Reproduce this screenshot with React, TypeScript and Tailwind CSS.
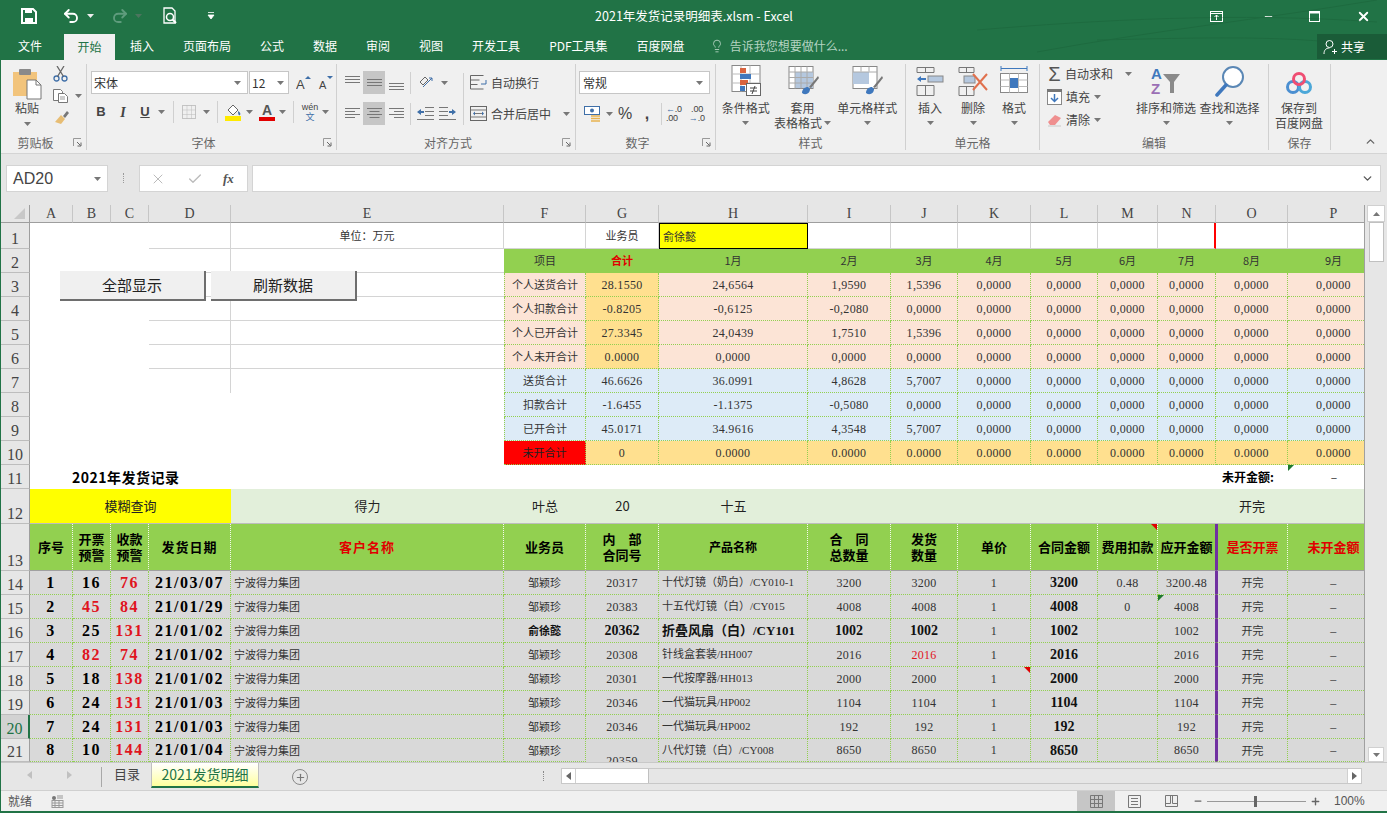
import type { ReactNode } from "react";
import { ChevronDown, ChevronUp, Lightbulb, Minus, Plus, Undo2, Redo2, X, Check } from "lucide-react";
import { twMerge } from "tailwind-merge";

const ui = "font-['Noto_Sans_CJK_SC','Noto_Sans',sans-serif]";
const thin = "font-['Liberation_Serif','Noto_Sans_CJK_SC',serif]";

function Caret({ className = "" }: { className?: string }) {
  return (
    <svg width="7" height="4" viewBox="0 0 7 4" className={`shrink-0 ${className}`}>
      <path d="M0 0h7L3.5 4z" fill="#777" />
    </svg>
  );
}

function Launcher() {
  return (
    <svg width="9" height="9" viewBox="0 0 9 9" className="absolute right-[4px] bottom-[3px]">
      <path d="M.5 8V.5H8" fill="none" stroke="#999" />
      <path d="M4 4l3.5 3.5M8 4.5V8H4.5" fill="none" stroke="#666" />
    </svg>
  );
}

function Group({ w, label, launcher, children }: { w: string; label: string; launcher?: boolean; children: ReactNode }) {
  return (
    <div className={`relative flex h-[86px] flex-col border-r border-[#d0d0d0] ${w}`}>
      <div className="flex min-h-0 flex-1">{children}</div>
      <div className={`flex h-[16px] items-center justify-center pt-[2px] text-[12px] leading-none text-[#666] ${launcher ? "pr-[16px]" : ""}`}>{label}</div>
      {launcher && <Launcher />}
    </div>
  );
}

function Slot({ w = "w-[22px]", sel, children }: { w?: string; sel?: boolean; children: ReactNode }) {
  return <div className={`flex h-[23px] shrink-0 items-center justify-center ${w} ${sel ? "bg-[#c6c6c6]" : ""}`}>{children}</div>;
}

function HLines({ y, widths, align = "l" }: { y: number; widths: number[]; align?: "l" | "c" | "r" }) {
  return (
    <svg width="15" height="17" viewBox="0 0 15 17">
      {widths.map((w, i) => {
        const x = align === "l" ? 0 : align === "c" ? (15 - w) / 2 : 15 - w;
        return <path key={i} d={`M${x} ${y + i * 3 + 0.5}h${w}`} stroke="#777" />;
      })}
    </svg>
  );
}

function BigButton({ w, icon, lines, caret = "below" }: { w: string; icon: ReactNode; lines: string[]; caret?: "below" | "inline" | "none" }) {
  return (
    <div className={`flex flex-col items-center ${w}`}>
      <div className="flex h-[33px] items-end justify-center">{icon}</div>
      <div className="mt-[3px] text-center text-[12px] leading-[15px] whitespace-nowrap text-[#444]">
        {lines.map((l, i) => (
          <div key={i} className="flex items-center justify-center gap-[2px]">
            {l}
            {caret === "inline" && i === lines.length - 1 && <Caret />}
          </div>
        ))}
      </div>
      {caret === "below" && <Caret className="mt-[6px]" />}
    </div>
  );
}

function SheetGridIcon({ children }: { children: ReactNode }) {
  return (
    <svg width="34" height="32" viewBox="0 0 34 32">
      {children}
    </svg>
  );
}

function Ribbon() {
  return (
    <div className="flex h-[94px] shrink-0 items-start border-b border-[#d4d4d4] bg-[#f0f0f0] pt-[4px] text-[12px] text-[#444]">
      <Group w="w-[86px]" label="剪贴板" launcher>
        <div className="flex w-[52px] flex-col items-center pt-[4px]">
          <svg width="30" height="32" viewBox="0 0 30 32">
            <rect x="1" y="4" width="24" height="24" fill="#f2c47c" />
            <rect x="7" y="1" width="12" height="6" rx="1" fill="#8a8a8a" />
            <path d="M15 12h9l5 5v14H15z" fill="#fff" stroke="#777" />
            <path d="M24 12v5h5" fill="none" stroke="#777" />
          </svg>
          <div className="text-[12px] leading-[16px]">粘贴</div>
          <Caret className="mt-[6px]" />
        </div>
        <div className="flex flex-col gap-[7px] pt-[2px]">
          <svg width="15" height="16" viewBox="0 0 15 16">
            <circle cx="3.5" cy="12.5" r="2.5" fill="none" stroke="#3f6fa8" strokeWidth="1.3" />
            <circle cx="11.5" cy="12.5" r="2.5" fill="none" stroke="#3f6fa8" strokeWidth="1.3" />
            <path d="M4.5 10.5L11 0M10.5 10.5L4 0" stroke="#666" strokeWidth="1.3" />
          </svg>
          <div className="flex items-center gap-[7px]">
            <svg width="15" height="14" viewBox="0 0 15 14">
              <path d="M.5.5h7l2 2v9h-9z" fill="#fff" stroke="#777" />
              <path d="M5.5 4.5h6l3 3v6h-9z" fill="#fff" stroke="#777" />
              <path d="M7 8h5M7 10h5" stroke="#999" />
            </svg>
            <Caret />
          </div>
          <svg width="16" height="14" viewBox="0 0 16 14" className="ml-[1px]">
            <path d="M1 12l6-7 4 4-4 5z" fill="#e7bd74" />
            <path d="M9 6l4-5 2 2-4 5z" fill="#777" />
          </svg>
        </div>
      </Group>

      <Group w="w-[250px]" label="字体" launcher>
        <div className="flex flex-col pt-[7px] pl-[4px]">
          <div className="flex items-center">
            <div className="flex h-[23px] w-[157px] items-center justify-between border border-[#c6c6c6] bg-white pr-[6px] pl-[2px]">
              <span className="text-[12px] text-[#333]">宋体</span>
              <Caret />
            </div>
            <div className="ml-[1px] flex h-[23px] w-[40px] items-center justify-between border border-[#c6c6c6] bg-white pr-[4px] pl-[2px]">
              <span className="text-[12px] text-[#333]">12</span>
              <Caret />
            </div>
            <svg width="16" height="14" viewBox="0 0 16 14" className="ml-[7px]">
              <text x="0" y="13" fontSize="13" fontFamily="Liberation Sans" fill="#444">A</text>
              <path d="M9 3l3-3 3 3z" fill="#3f6fa8" />
            </svg>
            <svg width="16" height="14" viewBox="0 0 16 14" className="ml-[6px]">
              <text x="1" y="13" fontSize="11" fontFamily="Liberation Sans" fill="#444">A</text>
              <path d="M9 0l3 3 3-3z" fill="#3f6fa8" />
            </svg>
          </div>
          <div className="mt-[7px] flex items-center">
            <div className="ml-[2px] flex w-[16px] justify-center font-['Liberation_Sans'] text-[13px] font-bold">B</div>
            <div className="ml-[6px] flex w-[16px] justify-center font-['Liberation_Serif'] text-[14px] font-bold italic">I</div>
            <div className="ml-[6px] flex w-[16px] justify-center font-['Liberation_Sans'] text-[13px] font-bold underline">U</div>
            <Caret className="ml-[5px]" />
            <div className="mx-[8px] h-[22px] w-px bg-[#d0d0d0]" />
            <svg width="14" height="14" viewBox="0 0 14 14">
              <rect x=".5" y=".5" width="13" height="13" fill="none" stroke="#999" strokeDasharray="1 1" />
              <path d="M.5 5h13M.5 9.5h13M5 .5v13M9.5 .5v13" stroke="#bbb" strokeDasharray="1 1" />
            </svg>
            <Caret className="ml-[7px]" />
            <div className="mx-[7px] h-[22px] w-px bg-[#d0d0d0]" />
            <svg width="17" height="20" viewBox="0 0 17 20">
              <path d="M3 8l5-5 5 5-5 5z" fill="#fff" stroke="#666" />
              <path d="M13 9c2 1 3 3 2 4s-2 0-2-4z" fill="#3f6fa8" />
              <rect y="14" width="16" height="5" fill="#ffea00" />
            </svg>
            <Caret className="ml-[4px]" />
            <div className="relative ml-[6px] h-[20px] w-[16px] text-center font-['Liberation_Sans'] text-[14px] leading-[16px] font-bold text-[#555]">
              A
              <div className="absolute bottom-[1px] left-0 h-[4px] w-full bg-[#e20000]" />
            </div>
            <Caret className="ml-[4px]" />
            <div className="mx-[7px] h-[22px] w-px bg-[#d0d0d0]" />
            <div className="flex w-[18px] flex-col items-center leading-none">
              <span className="font-['Liberation_Sans'] text-[9px] text-[#444]">wén</span>
              <span className="text-[9px] text-[#3f6fa8]">文</span>
            </div>
            <Caret className="ml-[3px]" />
          </div>
        </div>
      </Group>

      <Group w="w-[239px]" label="对齐方式" launcher>
        <div className="flex flex-col pt-[7px] pl-[4px]">
          <div className="flex items-center">
            <Slot><HLines y={2} widths={[15, 15, 15]} /></Slot>
            <Slot sel><HLines y={5} widths={[15, 15, 15]} /></Slot>
            <Slot><HLines y={9} widths={[15, 15, 15]} /></Slot>
            <div className="mx-[3px] h-[22px] w-px bg-[#d0d0d0]" />
            <Slot w="w-[24px]">
              <svg width="16" height="14" viewBox="0 0 16 14">
                <path d="M2 6l5-5 3 3-5 5z" fill="none" stroke="#666" />
                <path d="M5 11l9-9M11 2h3v3" fill="none" stroke="#3f6fa8" />
              </svg>
            </Slot>
            <Caret className="ml-[3px]" />
          </div>
          <div className="mt-[8px] flex items-center">
            <Slot><HLines y={3} widths={[15, 10, 15, 10]} /></Slot>
            <Slot sel><HLines y={3} widths={[15, 10, 15, 10]} align="c" /></Slot>
            <Slot><HLines y={3} widths={[15, 10, 15, 10]} align="r" /></Slot>
            <div className="mx-[3px] h-[22px] w-px bg-[#d0d0d0]" />
            <Slot>
              <svg width="17" height="13" viewBox="0 0 17 13">
                <path d="M8 .5h9M8 4.5h9M8 8.500h9M0 12.500h17" stroke="#777" />
                <path d="M0 5l4-3v2h3v2H4v2z" fill="#3f6fa8" />
              </svg>
            </Slot>
            <Slot>
              <svg width="17" height="13" viewBox="0 0 17 13">
                <path d="M0 .5h9M0 4.5h9M0 8.500h9M0 12.500h17" stroke="#777" />
                <path d="M17 5l-4-3v2h-3v2h3v2z" fill="#3f6fa8" />
              </svg>
            </Slot>
          </div>
        </div>
        <div className="mx-[5px] mt-[9px] h-[52px] w-px bg-[#d0d0d0]" />
        <div className="flex flex-col pt-[7px] pl-[1px]">
          <div className="flex h-[23px] items-center gap-[4px] whitespace-nowrap">
            <svg width="17" height="15" viewBox="0 0 17 15">
              <path d="M.5.5h13M.5 5h9M.5 9.5h7M.5 14h13M.5.5v13.5" fill="none" stroke="#666" />
              <path d="M16 5v4h-5" fill="none" stroke="#3f6fa8" />
            </svg>
            自动换行
          </div>
          <div className="mt-[8px] flex h-[23px] items-center gap-[4px] whitespace-nowrap">
            <svg width="17" height="15" viewBox="0 0 17 15">
              <rect x=".5" y=".5" width="16" height="14" fill="none" stroke="#666" />
              <path d="M.5 4h16M.5 11h16M4 7.5h9" stroke="#777" />
              <path d="M3 7.5l2-2v4zM14 7.5l-2-2v4z" fill="#3f6fa8" />
            </svg>
            合并后居中
            <Caret className="ml-[8px]" />
          </div>
        </div>
      </Group>

      <Group w="w-[140px]" label="数字" launcher>
        <div className="flex flex-col pt-[7px] pl-[3px]">
          <div className="flex h-[23px] w-[131px] items-center justify-between border border-[#c6c6c6] bg-white pr-[6px] pl-[3px]">
            <span className="text-[#333]">常规</span>
            <Caret />
          </div>
          <div className="mt-[8px] flex items-center">
            <Slot w="w-[26px]">
              <svg width="17" height="18" viewBox="0 0 17 18">
                <rect x=".5" y="1.5" width="15" height="8" fill="#fff" stroke="#3f6fa8" />
                <circle cx="8" cy="5.5" r="2" fill="#3f6fa8" />
                <path d="M7 11h9M7 13.500h9M7 16h9" stroke="#e8b24f" strokeWidth="1.500" />
              </svg>
            </Slot>
            <Caret className="ml-[1px]" />
            <div className="ml-[2px] w-[20px] text-center font-['Liberation_Sans'] text-[16px] leading-none">%</div>
            <div className="ml-[2px] w-[20px] text-center font-['Liberation_Sans'] text-[16px] leading-none font-bold">,</div>
            <div className="mx-[4px] h-[22px] w-px bg-[#d0d0d0]" />
            <div className="font-['Liberation_Sans'] text-[9px] leading-[9px] tracking-tight text-[#444]">
              <span className="text-[#3f6fa8]">←</span>.0<br />.00
            </div>
            <div className="ml-[7px] font-['Liberation_Sans'] text-[9px] leading-[9px] tracking-tight text-[#444]">
              &nbsp;.00<br /><span className="text-[#3f6fa8]">→</span>.0
            </div>
          </div>
        </div>
      </Group>

      <Group w="w-[190px]" label="样式">
        <BigButton
          w="w-[60px]"
          lines={["条件格式"]}
          icon={
            <SheetGridIcon>
              <rect x="3" y=".5" width="28" height="26" fill="#fff" stroke="#888" />
              <path d="M3 9h28M3 18h28M12 .5v26M21 .5v26" stroke="#bbb" />
              <rect x="11" y="3" width="6" height="5" fill="#d9643f" />
              <rect x="11" y="9" width="11" height="5" fill="#3f78bd" />
              <rect x="11" y="15" width="8" height="5" fill="#d9643f" />
              <rect x="11" y="21" width="5" height="5" fill="#3f78bd" />
              <rect x="17.500" y="18.500" width="14" height="12" fill="#fff" stroke="#666" />
              <path d="M21 23h7M21 26h7M26 21l-3 8" stroke="#444" />
            </SheetGridIcon>
          }
        />
        <BigButton
          w="w-[54px]"
          lines={["套用", "表格格式"]}
          caret="inline"
          icon={
            <SheetGridIcon>
              <rect x="3" y="1.500" width="24" height="22" fill="#fff" stroke="#888" />
              <rect x="9" y="7" width="18" height="16" fill="#b5c8df" />
              <path d="M3 7h24M3 12.500h24M3 18h24M9 1.500v22M15 1.500v22M21 1.500v22" stroke="#aaa" />
              <path d="M16 28c0-4 3-6 6-6l2 2c0 4-4 7-8 4z" fill="#3f78bd" />
              <path d="M23 22l9-11 1 2-8 10z" fill="#777" />
            </SheetGridIcon>
          }
        />
        <BigButton
          w="w-[76px]"
          lines={["单元格样式"]}
          icon={
            <SheetGridIcon>
              <rect x="3" y="1.500" width="24" height="22" fill="#fff" stroke="#888" />
              <rect x="3" y="7" width="16" height="12" fill="#b5c8df" />
              <path d="M3 7h24M11 1.500v5M19 1.500v5" stroke="#aaa" />
              <path d="M16 28c0-4 3-6 6-6l2 2c0 4-4 7-8 4z" fill="#3f78bd" />
              <path d="M23 22l9-11 1 2-8 10z" fill="#777" />
            </SheetGridIcon>
          }
        />
      </Group>

      <Group w="w-[134px]" label="单元格">
        <BigButton
          w="w-[46px] ml-[1px]"
          lines={["插入"]}
          icon={
            <svg width="28" height="30" viewBox="0 0 28 30">
              <path d="M1 .5h17M1 5.500h17M1 .5v5M9.500 .5v5M18 .5v5M1 18.500h17M1 28.500h17M1 18.500v10M9.500 18.500v10M18 18.500v10" stroke="#777" fill="none" />
              <rect x="12" y="9" width="15" height="6" fill="#b5c8df" stroke="#888" />
              <path d="M1 12l4-3v2h5v2H5v2z" fill="#3f78bd" />
            </svg>
          }
        />
        <BigButton
          w="w-[40px]"
          lines={["删除"]}
          icon={
            <svg width="32" height="30" viewBox="0 0 32 30">
              <path d="M2 .5h15M2 5.500h15M2 .5v5M9.500 .5v5M17 .5v5M2 19.500h15M2 28.500h15M2 19.500v9M9.500 19.500v9M17 19.500v9" stroke="#777" fill="none" />
              <rect x="7" y="9" width="11" height="7" fill="#b5c8df" stroke="#888" />
              <path d="M16 7l14 16M30 7L16 23" stroke="#e0704d" strokeWidth="2" />
            </svg>
          }
        />
        <BigButton
          w="w-[42px]"
          lines={["格式"]}
          icon={
            <svg width="28" height="32" viewBox="0 0 28 32">
              <path d="M1 1v5M27 1v5M1 3.500h26" stroke="#3f78bd" fill="none" />
              <rect x=".5" y="8.500" width="27" height="19" fill="#fff" stroke="#888" />
              <path d="M.5 15h27M.5 21.500h27M9.500 8.500v19M18.500 8.500v19" stroke="#bbb" />
              <rect x="10" y="13" width="8" height="10" fill="#3f78bd" />
            </svg>
          }
        />
      </Group>

      <Group w="w-[229px]" label="编辑">
        <div className="flex w-[92px] flex-col gap-[5px] pt-[1px] pl-[7px] whitespace-nowrap">
          <div className="flex h-[18px] items-center gap-[3px]">
            <span className="w-[16px] text-center font-['Liberation_Sans'] text-[20px] leading-none text-[#555]">Σ</span>
            自动求和
            <Caret className="ml-[9px]" />
          </div>
          <div className="flex h-[18px] items-center gap-[4px]">
            <svg width="15" height="16" viewBox="0 0 15 16">
              <rect x=".5" y=".5" width="14" height="15" fill="#fff" stroke="#888" />
              <rect width="15" height="3" fill="#777" />
              <path d="M7.500 5v7M4 9l3.500 3.500L11 9" fill="none" stroke="#3f78bd" strokeWidth="1.500" />
            </svg>
            填充
            <Caret />
          </div>
          <div className="flex h-[18px] items-center gap-[4px]">
            <svg width="15" height="14" viewBox="0 0 15 14">
              <path d="M1 9l7-7 6 3-6 7H3z" fill="#ef8f8f" />
              <path d="M1 13h13" stroke="#c8c8c8" />
            </svg>
            清除
            <Caret />
          </div>
        </div>
        <BigButton
          w="w-[62px] ml-[3px]"
          lines={["排序和筛选"]}
          icon={
            <svg width="30" height="32" viewBox="0 0 30 32">
              <text x="0" y="14" fontSize="15" fontFamily="Liberation Sans" fontWeight="bold" fill="#3f78bd">A</text>
              <text x="0" y="29" fontSize="15" fontFamily="Liberation Sans" fontWeight="bold" fill="#9b6fb5">Z</text>
              <path d="M12 9h17l-6 8v11h-4V17z" fill="#8a8a8a" />
            </svg>
          }
        />
        <BigButton
          w="w-[65px]"
          lines={["查找和选择"]}
          icon={
            <svg width="30" height="32" viewBox="0 0 30 32">
              <circle cx="18" cy="12" r="10" fill="#fff" stroke="#5a87b5" strokeWidth="2" />
              <path d="M11 20L2 30" stroke="#3f78bd" strokeWidth="3.500" strokeLinecap="round" />
            </svg>
          }
        />
      </Group>

      <Group w="w-[62px]" label="保存">
        <BigButton
          w="w-[60px]"
          lines={["保存到", "百度网盘"]}
          caret="none"
          icon={
            <svg width="28" height="28" viewBox="0 0 28 28">
              <circle cx="8" cy="18" r="5.500" fill="none" stroke="#4b8fd1" strokeWidth="3" />
              <circle cx="20" cy="18" r="5.500" fill="none" stroke="#4ba7d8" strokeWidth="3" />
              <circle cx="14" cy="10" r="5.500" fill="none" stroke="#ef4d72" strokeWidth="3" />
            </svg>
          }
        />
      </Group>
      <div className="flex h-[86px] flex-1 items-end justify-end pr-[10px] pb-[2px]">
        <ChevronUp size={13} strokeWidth={2.5} className="text-[#666]" />
      </div>
    </div>
  );
}

const tabs = ["插入", "页面布局", "公式", "数据", "审阅", "视图", "开发工具", "PDF工具集", "百度网盘"];

function TitleBar() {
  return (
    <>
      <div className="relative grid h-[32px] shrink-0 grid-cols-[1fr_auto_1fr] items-center text-white">
        <div className="flex items-center pl-[20px]">
          <svg width="16" height="16" viewBox="0 0 16 16">
            <path d="M1 1h11l3 3v11H1z" fill="none" stroke="#fff" strokeWidth="2" />
            <path d="M4 1h7v4H4zM4 10h8v5H4z" fill="#fff" />
          </svg>
          <Undo2 size={18} strokeWidth={2.5} className="ml-[25px]" />
          <Caret className="ml-[7px] brightness-200" />
          <Redo2 size={18} strokeWidth={2.5} className="ml-[17px] text-[#5f9c7d]" />
          <Caret className="ml-[6px] opacity-50" />
          <div className="ml-[20px] flex">
            <svg width="18" height="18" viewBox="0 0 18 18">
              <path d="M2 1h8l3 3v12H2z" fill="none" stroke="#fff" strokeWidth="1.300" />
              <circle cx="8" cy="10" r="3.500" fill="none" stroke="#fff" strokeWidth="1.500" />
              <path d="M10.500 12.500L14 16" stroke="#fff" strokeWidth="2" />
            </svg>
          </div>
          <svg width="8" height="8" viewBox="0 0 8 8" className="ml-[27px]">
            <path d="M1 .5h6M1 3h6l-3 4z" fill="#fff" stroke="#fff" strokeWidth=".8" />
          </svg>
        </div>
        <div className={`text-[12.500px] ${ui}`}>2021年发货记录明细表.xlsm - Excel</div>
        <div className="flex items-center justify-end">
          <svg width="13" height="11" viewBox="0 0 13 11" className="mr-[40px]">
            <rect x=".5" y=".5" width="12" height="10" fill="none" stroke="#fff" />
            <path d="M.5 2.500h12" stroke="#fff" />
            <path d="M6.500 9V4M4.500 6l2-2 2 2" fill="none" stroke="#fff" />
          </svg>
          <Minus size={11} strokeWidth={2.5} className="mr-[35px]" />
          <svg width="11" height="11" viewBox="0 0 11 11" className="mr-[36px]">
            <rect x=".5" y=".5" width="10" height="10" fill="none" stroke="#fff" />
            <path d="M0 1.500h11" stroke="#fff" strokeWidth="2" />
          </svg>
          <X size={15} strokeWidth={3} className="mr-[16px]" />
        </div>
        <svg width="400" height="60" viewBox="0 0 400 60" className="pointer-events-none absolute top-0 right-[10px] opacity-25">
          <path d="M0 30C120 20 260 12 400 22M60 52C180 30 280 20 400 0M120 40C220 38 320 34 400 48" fill="none" stroke="#14532d" />
        </svg>
      </div>
      <div className="relative flex h-[28px] shrink-0 items-end text-[12px] text-white">
        <div className="mb-[5px] ml-[17px] leading-[18px]">文件</div>
        <div className="ml-[22px] flex h-[26px] w-[51px] items-center justify-center bg-[#f0f0f0] text-[#217346]">开始</div>
        <div className="mb-[5px] ml-[15px] flex gap-[29px] leading-[18px] whitespace-nowrap">
          {tabs.map((t) => (
            <span key={t}>{t}</span>
          ))}
        </div>
        <div className="mb-[5px] ml-[25px] flex items-center gap-[6px] leading-[18px] text-[#b5d3c2]">
          <Lightbulb size={14} strokeWidth={1.5} />
          告诉我您想要做什么...
        </div>
        <div className="absolute top-[2px] right-0 flex h-[25px] w-[70px] items-center gap-[3px] bg-[#1a5c38] pl-[6px]">
          <svg width="15" height="16" viewBox="0 0 15 16">
            <circle cx="6.500" cy="5" r="3.500" fill="none" stroke="#fff" />
            <path d="M1 15c0-4 2-6 5.500-6M11.500 10v5M9 12.500h5" fill="none" stroke="#fff" />
          </svg>
          共享
        </div>
      </div>
    </>
  );
}

function FormulaBar() {
  return (
    <div className="flex h-[51px] shrink-0 items-start bg-[#e6e6e6] pt-[11px]">
      <div className="ml-[5px] flex h-[27px] w-[102px] items-center justify-between border border-[#d4d4d4] bg-white pr-[6px] pl-[6px]">
        <span className="font-['Liberation_Sans'] text-[16px] text-[#444]">AD20</span>
        <Caret />
      </div>
      <div className="mt-[8px] ml-[15px] flex h-[10px] w-px border-l border-dotted border-[#999]" />
      <div className="ml-[15px] flex h-[27px] w-[109px] items-center border border-[#d4d4d4] bg-white">
        <X size={16} strokeWidth={1.5} className="ml-[10px] text-[#bbb]" />
        <Check size={16} strokeWidth={2} className="ml-[21px] text-[#bbb]" />
        <span className="ml-[20px] font-['Liberation_Serif'] text-[13px] font-bold text-[#555] italic">fx</span>
      </div>
      <div className="mr-[6px] ml-[4px] flex h-[27px] flex-1 items-center justify-end border border-[#d4d4d4] bg-white pr-[6px]">
        <ChevronDown size={13} strokeWidth={2.5} className="text-[#555]" />
      </div>
    </div>
  );
}

const letters = ["A", "B", "C", "D", "E", "F", "G", "H", "I", "J", "K", "L", "M", "N", "O", "P"];

const dash = "border-r border-b border-dotted border-[#92d050]";
const purpleR = "border-r border-r-[#7030a0] [border-right-style:solid]!";
const purpleL = "border-l-2 border-l-[#7030a0] [border-left-style:solid]!";
const small = `flex items-center justify-center overflow-hidden whitespace-nowrap text-[12px] tracking-[0.3px] text-[#333] ${thin}`;
const cjk = `flex items-center justify-center overflow-hidden whitespace-nowrap text-[11px] text-[#333] ${ui}`;
const boldNum = `flex items-center justify-center overflow-hidden text-[16px] font-bold tracking-[1.5px] text-black ${thin}`;
const boldPlain = `flex items-center justify-center overflow-hidden whitespace-nowrap text-[14px] font-bold text-[#111] ${thin}`;

function RowHead({ n, active }: { n: number; active?: boolean }) {
  return (
    <div
      className={`flex items-end justify-center border-b border-[#bdbdbd] text-[16px] leading-[18px] ${thin} ${
        active ? "border-r-2 border-r-[#217346] bg-[#d2d2d2] text-[#217346]" : "border-r border-r-[#9e9e9e] bg-[#e6e6e6] text-[#444]"
      }`}
    >
      {n}
    </div>
  );
}

function Tri({ color, side }: { color: string; side: "l" | "r" }) {
  return (
    <svg width="6" height="6" viewBox="0 0 6 6" className={`absolute top-0 ${side === "l" ? "left-0" : "right-0"}`}>
      <path d={side === "l" ? "M0 0h6L0 6z" : "M0 0h6v6z"} fill={color} />
    </svg>
  );
}

const zero = "0,0000";
const topRows = [
  { label: "个人送货合计", g: "28.1550", v: ["24,6564", "1,9590", "1,5396"], tone: "peach" },
  { label: "个人扣款合计", g: "-0.8205", v: ["-0,6125", "-0,2080", zero], tone: "peach" },
  { label: "个人已开合计", g: "27.3345", v: ["24,0439", "1,7510", "1,5396"], tone: "peach" },
  { label: "个人未开合计", g: "0.0000", v: [zero, zero, zero], tone: "peach" },
  { label: "送货合计", g: "46.6626", v: ["36.0991", "4,8628", "5,7007"], tone: "blue" },
  { label: "扣款合计", g: "-1.6455", v: ["-1.1375", "-0,5080", zero], tone: "blue" },
  { label: "已开合计", g: "45.0171", v: ["34.9616", "4,3548", "5,7007"], tone: "blue" },
];

const months = ["1月", "2月", "3月", "4月", "5月", "6月", "7月", "8月", "9月"];

const records = [
  { n: 1, a: 16, b: 76, d: "21/03/07", p: "邹颖珍", h: "20317", name: "十代灯镜（奶白）/CY010-1", q: 3200, s: 3200, fee: "0.48", due: "3200.48" },
  { n: 2, a: 45, b: 84, d: "21/01/29", p: "邹颖珍", h: "20383", name: "十五代灯镜（白）/CY015", q: 4008, s: 4008, fee: "0", due: "4008" },
  { n: 3, a: 25, b: 131, d: "21/01/02", p: "俞徐懿", h: "20362", name: "折叠风扇（白）/CY101", q: 1002, s: 1002, fee: "", due: "1002", bold: true },
  { n: 4, a: 82, b: 74, d: "21/01/02", p: "邹颖珍", h: "20308", name: "针线盒套装/HH007", q: 2016, s: 2016, fee: "", due: "2016", redShip: true },
  { n: 5, a: 18, b: 138, d: "21/01/02", p: "邹颖珍", h: "20301", name: "一代按摩器/HH013", q: 2000, s: 2000, fee: "", due: "2000" },
  { n: 6, a: 24, b: 131, d: "21/01/03", p: "邹颖珍", h: "20346", name: "一代猫玩具/HP002", q: 1104, s: 1104, fee: "", due: "1104" },
  { n: 7, a: 24, b: 131, d: "21/01/03", p: "邹颖珍", h: "20346", name: "一代猫玩具/HP002", q: 192, s: 192, fee: "", due: "192" },
  { n: 8, a: 10, b: 144, d: "21/01/04", p: "邹颖珍", h: "20359", name: "八代灯镜（白）/CY008", q: 8650, s: 8650, fee: "", due: "8650", clip: true },
];

const headCols: { t: ReactNode; cls: string }[] = [
  { t: "序号", cls: "text-[13px]" },
  { t: <>开票<br />预警</>, cls: "text-[13px] leading-[16px]" },
  { t: <>收款<br />预警</>, cls: "text-[13px] leading-[16px]" },
  { t: "发货日期", cls: "text-[13px] tracking-[1px]" },
  { t: "客户名称", cls: "text-[13px] text-[#e00000] tracking-[1px]" },
  { t: "业务员", cls: "text-[13px]" },
  { t: <>内　部<br />合同号</>, cls: "text-[13px] leading-[16px]" },
  { t: "产品名称", cls: "text-[12px]" },
  { t: <>合　同<br />总数量</>, cls: "text-[13px] leading-[16px]" },
  { t: <>发货<br />数量</>, cls: "text-[13px] leading-[16px]" },
  { t: "单价", cls: "text-[13px]" },
  { t: "合同金额", cls: "text-[13px]" },
  { t: "费用扣款", cls: "text-[13px]" },
  { t: "应开金额", cls: "text-[13px]" },
  { t: "是否开票", cls: "text-[13px] text-[#e00000]" },
  { t: "未开金额", cls: "text-[13px] text-[#e00000]" },
];

function Sheet() {
  return (
    <div className="relative grid w-[1363px] grid-cols-[29px_43px_38px_38px_82px_273px_82px_73px_149px_83px_67px_73px_67px_60px_58px_72px_92px] grid-rows-[18px_26px_repeat(10,24px)_35px_47px_repeat(7,24px)_23px] overflow-hidden bg-white">
      {/* column letters */}
      <div className="flex items-end justify-end border-r border-b border-[#9e9e9e] bg-[#e6e6e6] pr-[4px] pb-[3px]">
        <svg width="11" height="11" viewBox="0 0 11 11"><path d="M11 0v11H0z" fill="#c8c8c8" /></svg>
      </div>
      {letters.map((l) => (
        <div key={l} className={`flex items-center justify-center border-r border-b border-r-[#c6c6c6] border-b-[#9e9e9e] bg-[#e6e6e6] text-[14px] leading-none text-[#444] ${thin}`}>
          {l}
        </div>
      ))}

      {/* row 1 */}
      <RowHead n={1} />
      <div className="col-span-3" />
      <div className="border-r border-b border-[#d4d4d4]" />
      <div className={`flex items-center justify-center border-r border-b border-[#d4d4d4] text-[11px] text-[#333] ${ui}`}>单位：万元</div>
      <div className="border-r border-b border-[#d4d4d4]" />
      <div className={`flex items-center justify-center border-r border-b border-[#d4d4d4] text-[11px] text-[#333] ${ui}`}>业务员</div>
      <div className={`flex items-center border border-black bg-[#ffff00] pl-[3px] text-[11px] text-[#333] ${ui}`}>俞徐懿</div>
      {["I", "J", "K", "L", "M", "N", "O", "P"].map((c) => (
        <div key={c} className={`border-b border-b-[#d4d4d4] ${c === "N" ? "border-r-2 border-r-[#ff0000]" : "border-r border-r-[#d4d4d4]"}`} />
      ))}

      {/* row 2 */}
      <RowHead n={2} />
      <div className="col-span-3" />
      <div className="border-r border-b border-[#d4d4d4]" />
      <div className="border-b border-[#d4d4d4]" />
      <div className={twMerge(cjk, dash, "border-l bg-[#92d050]")}>项目</div>
      <div className={twMerge(cjk, dash, "bg-[#92d050] font-bold text-[#e00000]")}>合计</div>
      {months.map((m) => (
        <div key={m} className={twMerge(cjk, dash, "bg-[#92d050]")}>{m}</div>
      ))}

      {/* rows 3-9 */}
      {topRows.map((r, i) => {
        const bg = r.tone === "peach" ? "bg-[#fce4d6]" : "bg-[#ddebf7]";
        return (
          <div key={r.label} className="contents">
            <RowHead n={i + 3} />
            <div className="col-span-3" />
            {i < 5 ? <div className={`border-r border-[#d4d4d4] ${i < 4 ? "border-b" : ""}`} /> : <div />}
            <div className={i < 4 ? "border-b border-[#d4d4d4]" : ""} />
            <div className={`${cjk} ${dash} border-l ${bg}`}>{r.label}</div>
            <div className={`${small} ${dash} ${r.tone === "peach" ? "bg-[#ffe08f]" : "bg-[#ddebf7]"}`}>{r.g}</div>
            {[...r.v, zero, zero, zero, zero, zero, zero].map((v, j) => (
              <div key={j} className={`${small} ${dash} ${bg}`}>{v}</div>
            ))}
          </div>
        );
      })}

      {/* row 10 */}
      <RowHead n={10} />
      <div className="col-span-5" />
      <div className={twMerge(cjk, dash, "bg-[#ff0000] text-[#222]")}>未开合计</div>
      <div className={`${small} ${dash} bg-[#ffe08f]`}>0</div>
      {Array.from({ length: 9 }).map((_, j) => (
        <div key={j} className={`${small} ${dash} bg-[#ffe08f]`}>0.0000</div>
      ))}

      {/* row 11 */}
      <RowHead n={11} />
      <div className={`col-span-14 flex items-center pl-[42px] text-[14px] font-bold tracking-[0.5px] text-black ${ui}`}>2021年发货记录</div>
      <div className={`flex items-center justify-end pr-[14px] text-[12px] font-bold whitespace-nowrap text-black ${ui}`}>未开金额:</div>
      <div className="relative flex items-center justify-center text-[12px] text-[#333]">
        <Tri color="#1f7a2e" side="l" />–
      </div>

      {/* row 12 */}
      <RowHead n={12} />
      <div className={`col-span-4 flex items-center justify-center border-b border-[#bdbdbd] bg-[#ffff00] text-[13px] text-[#222] ${ui}`}>模糊查询</div>
      {["得力", "叶总", "20", "十五", "", "", "", "", "", "", "开完", ""].map((t, i) => (
        <div key={i} className={`flex items-center justify-center border-b border-[#bdbdbd] bg-[#e2efda] text-[13px] text-[#222] ${ui}`}>{t}</div>
      ))}

      {/* row 13 */}
      <RowHead n={13} />
      {headCols.map((c, i) => (
        <div
          key={i}
          className={twMerge(
            "relative flex items-center justify-center overflow-hidden border-b border-b-[#a0a0a0] bg-[#92d050] text-center font-bold whitespace-nowrap text-black",
            ui,
            c.cls,
            i === 13 ? purpleR : "border-r border-dotted border-r-[#f4f9ec] [border-bottom-style:solid]!",
            i === 14 ? purpleL : "",
          )}
        >
          {c.t}
          {i === 12 && <Tri color="#e00000" side="r" />}
        </div>
      ))}

      {/* rows 14-21 */}
      {records.map((r, i) => {
        const red = (on: boolean) => (on ? "text-[#e0141e]" : "");
        const plain = r.bold ? boldPlain : small;
        return (
          <div key={r.n} className="contents">
            <RowHead n={i + 14} active={r.n === 7} />
            <div className={`${boldNum} ${dash} bg-[#d9d9d9]`}>{r.n}</div>
            <div className={twMerge(boldNum, dash, "bg-[#d9d9d9]", red(r.a >= 45))}>{r.a}</div>
            <div className={twMerge(boldNum, dash, "bg-[#d9d9d9]", red(true))}>{r.b}</div>
            <div className={`${boldNum} ${dash} bg-[#d9d9d9]`}>{r.d}</div>
            <div className={twMerge(cjk, dash, "justify-start bg-[#d9d9d9] pl-[3px]")}>宁波得力集团</div>
            <div className={twMerge(cjk, dash, "bg-[#d9d9d9]", r.bold ? "font-bold text-[#111]" : "")}>{r.p}</div>
            <div className={twMerge(plain, dash, "bg-[#d9d9d9]", r.clip ? "items-start border-b-0 pt-[13px]" : "")}>{r.h}</div>
            <div className={twMerge(cjk, dash, "justify-start bg-[#d9d9d9] pl-[3px]", thin, r.bold ? "text-[13px] font-bold text-[#111]" : "")}>{r.name}</div>
            <div className={twMerge(plain, dash, "bg-[#d9d9d9]")}>{r.q}</div>
            <div className={twMerge(plain, dash, "bg-[#d9d9d9]", red(!!r.redShip))}>{r.s}</div>
            <div className={twMerge(small, dash, "relative bg-[#d9d9d9]")}>
              1{r.n === 5 && <Tri color="#e00000" side="r" />}
            </div>
            <div className={twMerge(boldPlain, dash, "bg-[#d9d9d9]")}>{r.q}</div>
            <div className={twMerge(small, dash, "bg-[#d9d9d9]")}>{r.fee}</div>
            <div className={twMerge(small, dash, purpleR, "relative bg-[#d9d9d9]")}>
              {r.n === 2 && <Tri color="#1f7a2e" side="l" />}
              {r.due}
            </div>
            <div className={twMerge(cjk, dash, purpleL, "bg-[#d9d9d9]")}>开完</div>
            <div className={twMerge(small, dash, "bg-[#d9d9d9]")}>–</div>
          </div>
        );
      })}

      {/* form buttons sit on top of the cells */}
      <button className={`absolute top-[66px] left-[59px] flex h-[30px] w-[146px] items-center justify-center border-r-2 border-b-2 border-[#6e6e6e] bg-[#f0f0f0] text-[15px] text-[#222] ${ui}`}>
        全部显示
      </button>
      <button className={`absolute top-[66px] left-[210px] flex h-[30px] w-[146px] items-center justify-center border-r-2 border-b-2 border-[#6e6e6e] bg-[#f0f0f0] text-[15px] text-[#222] ${ui}`}>
        刷新数据
      </button>
    </div>
  );
}

function VScroll() {
  return (
    <div className="flex flex-1 flex-col items-center border-l border-[#a0a0a0] bg-[#e6e6e6]">
      <div className="flex h-[17px] w-[18px] items-center justify-center border border-[#d0d0d0] bg-white">
        <Caret className="rotate-180" />
      </div>
      <div className="h-[40px] w-[15px] border border-[#c0c0c0] bg-white" />
      <div className="flex-1" />
      <div className="flex h-[15px] w-[16px] items-center justify-center border border-[#d0d0d0] bg-white">
        <Caret />
      </div>
    </div>
  );
}

function SheetTabs() {
  return (
    <div className="flex h-[28px] shrink-0 items-start border-t border-[#c8c8c8] bg-[#e6e6e6] text-[13px]">
      <div className="mt-[8px] ml-[26px] flex w-[45px] justify-between">
        <span className="h-0 w-0 border-y-[4px] border-r-[5px] border-y-transparent border-r-[#c0c0c0]" />
        <span className="h-0 w-0 border-y-[4px] border-l-[5px] border-y-transparent border-l-[#c0c0c0]" />
      </div>
      <div className="mt-[4px] ml-[29px] h-[20px] w-px bg-[#a8a8a8]" />
      <div className={`mt-[1px] ml-[12px] text-[#444] ${ui}`}>目录</div>
      <div className={`ml-[11px] flex h-[25px] w-[108px] items-center justify-center border-x border-b-2 border-x-[#c0c0c0] border-b-[#217346] bg-gradient-to-b from-white to-[#ffff9c] text-[14px] text-[#217346] ${ui}`}>
        2021发货明细
      </div>
      <div className="mt-[6px] ml-[33px] flex h-[16px] w-[16px] items-center justify-center rounded-full border border-[#888]">
        <Plus size={11} strokeWidth={2.5} className="text-[#777]" />
      </div>
      <div className="mt-[8px] ml-[235px] h-[10px] border-l border-dotted border-[#888]" />
      <div className="mt-[5px] ml-[17px] flex h-[16px] w-[801px] items-center border border-[#c8c8c8] bg-[#e6e6e6]">
        <div className="flex h-full w-[14px] items-center justify-center border-r border-[#d0d0d0] bg-white">
          <span className="h-0 w-0 border-y-[4px] border-r-[5px] border-y-transparent border-r-[#666]" />
        </div>
        <div className="h-full w-[73px] border-r border-[#c0c0c0] bg-white" />
        <div className="flex-1" />
        <div className="flex h-full w-[14px] items-center justify-center border-l border-[#d0d0d0] bg-white">
          <span className="h-0 w-0 border-y-[4px] border-l-[5px] border-y-transparent border-l-[#666]" />
        </div>
      </div>
    </div>
  );
}

function StatusBar() {
  return (
    <div className="flex h-[21px] shrink-0 items-center border-t border-[#d0d0d0] bg-[#f0f0f0] text-[12px] text-[#555]">
      <span className="ml-[7px]">就绪</span>
      <svg width="13" height="13" viewBox="0 0 13 13" className="ml-[19px]">
        <circle cx="3" cy="3" r="2" fill="#777" />
        <rect x="1" y="5.500" width="11" height="7" fill="none" stroke="#999" />
        <path d="M1 8h11M1 10.500h11M4 5.500v7M8 5.500v7M6 1h6M6 3h6" stroke="#999" />
      </svg>
      <div className="ml-[1013px] flex h-full w-[38px] items-center justify-center bg-[#c6c6c6]">
        <svg width="13" height="13" viewBox="0 0 13 13">
          <path d="M.5.5h12v12H.5zM.5 4.500h12M.5 8.500h12M4.500 .5v12M8.500 .5v12" fill="none" stroke="#777" />
        </svg>
      </div>
      <svg width="13" height="13" viewBox="0 0 13 13" className="ml-[13px]">
        <path d="M.5.5h12v12H.5zM3 3.500h7M3 6.500h7M3 9.500h7" fill="none" stroke="#777" />
      </svg>
      <svg width="13" height="13" viewBox="0 0 13 13" className="ml-[24px]">
        <path d="M.5.5h12v11H.5zM.5 8.500h5M7.500 8.500h5M5.500 .5v8M7.500 .5v8" fill="none" stroke="#777" />
      </svg>
      <Minus size={10} strokeWidth={3} className="ml-[15px] text-[#666]" />
      <div className="relative ml-[4px] h-px w-[99px] bg-[#999]">
        <div className="absolute top-[-5px] left-[47px] h-[11px] w-[3px] bg-[#666]" />
      </div>
      <Plus size={11} strokeWidth={3} className="ml-[4px] text-[#666]" />
      <span className="ml-[13px] font-['Liberation_Sans']">100%</span>
    </div>
  );
}

export default function App() {
  return (
    <div className={`flex h-[813px] w-[1387px] flex-col overflow-hidden border-b-2 border-l border-[#217346] bg-[#217346] ${ui}`}>
      <TitleBar />
      <Ribbon />
      <FormulaBar />
      <div className="flex shrink-0">
        <Sheet />
        <VScroll />
      </div>
      <SheetTabs />
      <StatusBar />
    </div>
  );
}
